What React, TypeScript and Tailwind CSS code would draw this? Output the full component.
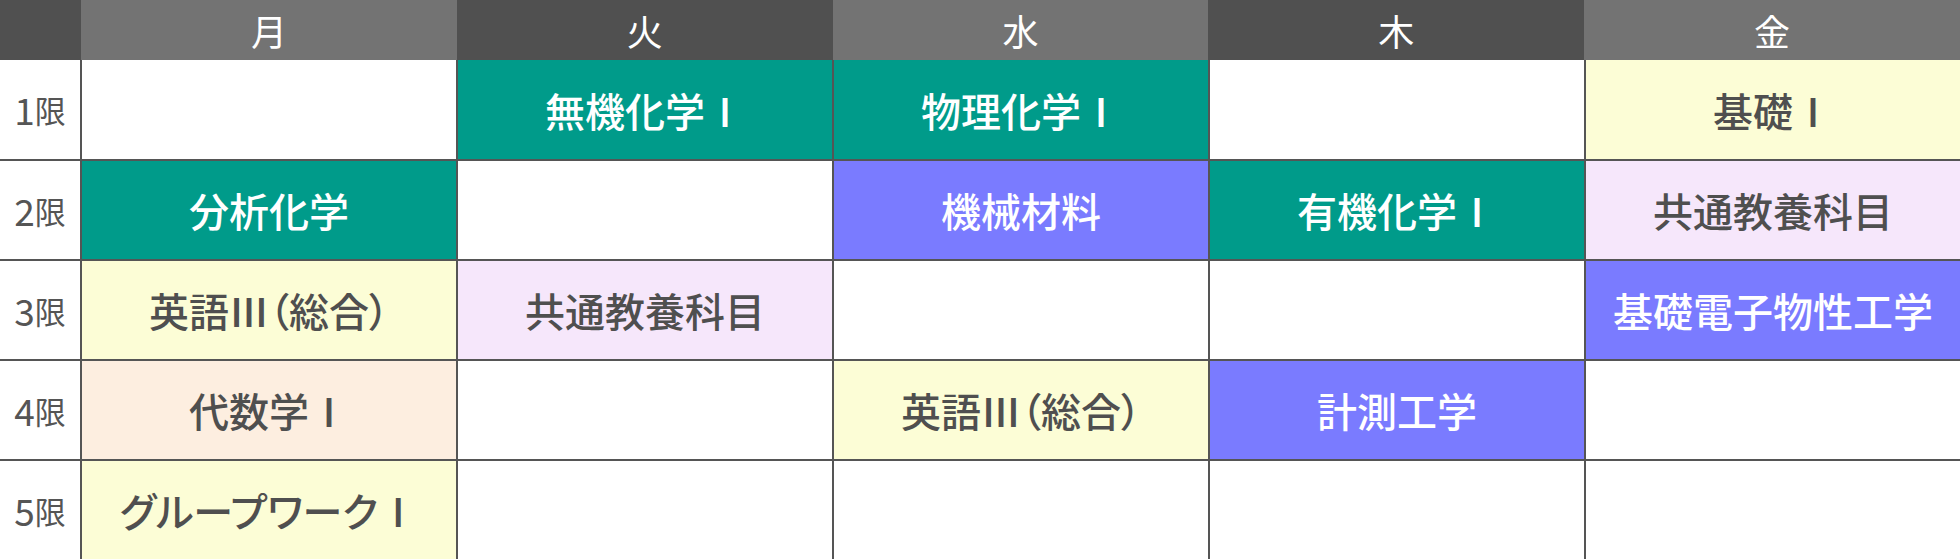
import React from 'react';

// --- 時間割データ ---
type Kind = 'teal' | 'blue' | 'yellow' | 'lavender' | 'peach' | 'none';

const DAYS = ['月', '火', '水', '木', '金'];

const STYLE: Record<Kind, string> = {
  teal: 'bg-[#009b8a] text-white',
  blue: 'bg-[#7a7bff] text-white',
  yellow: 'bg-[#fcfdd6] text-[#4f4f4f]',
  lavender: 'bg-[#f6e7fb] text-[#4f4f4f]',
  peach: 'bg-[#fdeee0] text-[#4f4f4f]',
  none: 'bg-white',
};

const ROWS: [string, Kind][][] = [
  [['', 'none'], ['無機化学Ⅰ', 'teal'], ['物理化学Ⅰ', 'teal'], ['', 'none'], ['基礎Ⅰ', 'yellow']],
  [['分析化学', 'teal'], ['', 'none'], ['機械材料', 'blue'], ['有機化学Ⅰ', 'teal'], ['共通教養科目', 'lavender']],
  [['英語Ⅲ（総合）', 'yellow'], ['共通教養科目', 'lavender'], ['', 'none'], ['', 'none'], ['基礎電子物性工学', 'blue']],
  [['代数学Ⅰ', 'peach'], ['', 'none'], ['英語Ⅲ（総合）', 'yellow'], ['計測工学', 'blue'], ['', 'none']],
  [['グループワークⅠ', 'yellow'], ['', 'none'], ['', 'none'], ['', 'none'], ['', 'none']],
];

export default function App() {
  return (
    <div className="w-[1960px] h-[560px] overflow-hidden bg-white font-['Noto_Sans_CJK_JP','Noto_Sans',sans-serif]">
      {/* ヘッダー */}
      <div className="grid grid-cols-[81px_repeat(5,1fr)] h-[60px] text-white text-[36px]">
        <div className="bg-[#505050]" />
        {DAYS.map((d, i) => (
          <div
            key={d}
            className={`flex items-center justify-center ${i % 2 === 0 ? 'bg-[#737373]' : 'bg-[#505050]'}`}
          >
            {d}
          </div>
        ))}
      </div>

      {/* 本体 */}
      <div className="grid grid-cols-[80px_repeat(5,1fr)] grid-rows-[99px_98px_98px_98px_98px] gap-[2px] bg-[#555555]">
        {ROWS.map((row, r) => (
          <React.Fragment key={r}>
            <div className="bg-white flex items-center justify-center text-[#555555]">
              <span className="text-[37px] leading-none">{r + 1}</span>
              <span className="text-[31px] leading-none">限</span>
            </div>
            {row.map(([name, kind], c) => (
              <div
                key={c}
                className={`flex items-center justify-center text-[40px] font-medium whitespace-nowrap [font-feature-settings:'palt'] ${STYLE[kind]}`}
              >
                {name}
              </div>
            ))}
          </React.Fragment>
        ))}
      </div>
    </div>
  );
}
